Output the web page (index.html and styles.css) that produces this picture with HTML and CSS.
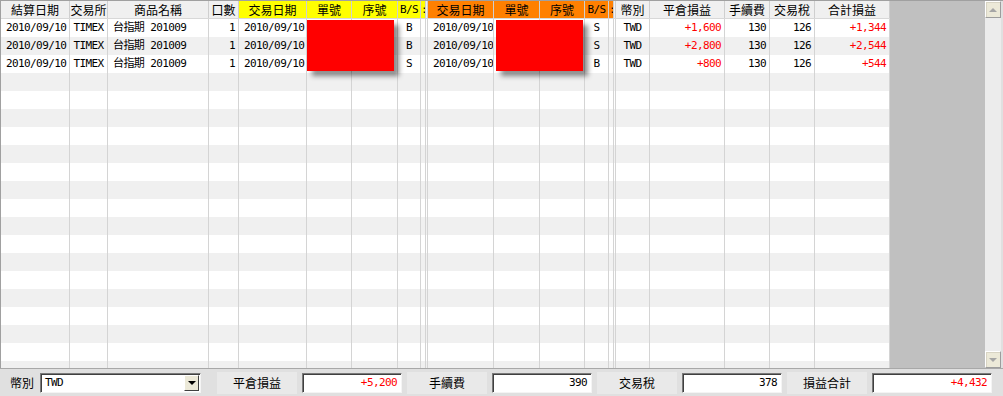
FILE: index.html
```html
<!DOCTYPE html>
<html lang="zh-Hant">
<head>
<meta charset="utf-8">
<title>Trades</title>
<link rel="stylesheet" href="styles.css">
</head>
<body>
<div class="app">
  <div class="main">
    <div class="grid">
      <div class="row head">
        <span>結算日期</span><span>交易所</span><span>商品名稱</span><span>口數</span>
        <span class="y">交易日期</span><span class="y">單號</span><span class="y">序號</span><span class="y lat">B/S</span><span class="y lat cut">:</span><span class="gap"></span>
        <span class="o">交易日期</span><span class="o">單號</span><span class="o">序號</span><span class="o lat">B/S</span><span class="o lat cut">:</span><span class="gap"></span>
        <span>幣別</span><span>平倉損益</span><span>手續費</span><span>交易稅</span><span>合計損益</span>
      </div>
      <div class="row data">
        <span class="l">2010/09/10</span><span class="c">TIMEX</span><span class="l">台指期 201009</span><span class="r">1</span>
        <span class="l">2010/09/10</span><span></span><span></span><span class="c">B</span><span></span><span></span>
        <span class="l">2010/09/10</span><span></span><span></span><span class="c">S</span><span></span><span></span>
        <span class="c">TWD</span><span class="r red">+1,600</span><span class="r">130</span><span class="r">126</span><span class="r red">+1,344</span>
      </div>
      <div class="row data alt">
        <span class="l">2010/09/10</span><span class="c">TIMEX</span><span class="l">台指期 201009</span><span class="r">1</span>
        <span class="l">2010/09/10</span><span></span><span></span><span class="c">B</span><span></span><span></span>
        <span class="l">2010/09/10</span><span></span><span></span><span class="c">S</span><span></span><span></span>
        <span class="c">TWD</span><span class="r red">+2,800</span><span class="r">130</span><span class="r">126</span><span class="r red">+2,544</span>
      </div>
      <div class="row data">
        <span class="l">2010/09/10</span><span class="c">TIMEX</span><span class="l">台指期 201009</span><span class="r">1</span>
        <span class="l">2010/09/10</span><span></span><span></span><span class="c">S</span><span></span><span></span>
        <span class="l">2010/09/10</span><span></span><span></span><span class="c">B</span><span></span><span></span>
        <span class="c">TWD</span><span class="r red">+800</span><span class="r">130</span><span class="r">126</span><span class="r red">+544</span>
      </div>
      <div class="row fill">
        <span></span><span></span><span></span><span></span><span></span><span></span><span></span>
        <span></span><span></span><span></span><span></span><span></span><span></span><span></span>
        <span></span><span></span><span></span><span></span><span></span><span></span><span></span>
      </div>
      <div class="mask mask-a"></div>
      <div class="mask mask-b"></div>
    </div>
    <div class="blank"></div>
    <div class="scroll">
      <div class="sbtn"><i class="tri up"></i></div>
      <div class="track"></div>
      <div class="sbtn"><i class="tri down"></i></div>
    </div>
  </div>
  <div class="bar">
    <span class="lbl first">幣別</span>
    <div class="select"><span class="sval">TWD</span><span class="dd"><i class="tri dark"></i></span></div>
    <span class="blk blk-first">平倉損益</span>
    <span class="box red">+5,200</span>
    <span class="blk">手續費</span>
    <span class="box">390</span>
    <span class="blk">交易稅</span>
    <span class="box">378</span>
    <span class="blk">損益合計</span>
    <span class="box wide red">+4,432</span>
  </div>
</div>
</body>
</html>
```

FILE: styles.css
```css
* { box-sizing: border-box; }

html, body {
  margin: 0;
  padding: 0;
  background: #e0e0e0;
}

.app {
  width: 1003px;
  height: 396px;
  overflow: hidden;
  display: flex;
  flex-direction: column;
  font-family: "Noto Sans CJK TC", sans-serif;
  font-size: 12px;
  color: #000;
}

.main {
  height: 368px;
  display: flex;
  border-top: 1px solid #a0a0a0;
  border-left: 1px solid #a0a0a0;
  padding-right: 2px;
  background: #e0e0e0;
}

.grid {
  position: relative;
  width: 889px;
  display: flex;
  flex-direction: column;
  background: #fff;
}

.row {
  display: grid;
  grid-template-columns: 69px 38px 101px 30px 68px 45px 46px 23px 5px 2px 66px 46px 45px 24px 5px 2px 34px 75px 45px 45px 75px;
  height: 18px;
}

.row > span {
  border-right: 1px solid #d4d4d4;
  overflow: hidden;
  white-space: nowrap;
  line-height: 18px;
}

.head {
  background: #f0f0f0;
  border-bottom: 1px solid #d8d8d8;
}

.head > span {
  text-align: center;
  line-height: 17px;
  border-right: 1px solid #cfcfcf;
}

.head .y { background: #ffff00; }
.head .o { background: #ff8000; }
.head .gap { background: #f0f0f0; }

.lat, .data > span, .box, .sval {
  font-family: "DejaVu Sans Mono", "Noto Sans CJK TC", monospace;
  font-size: 11px;
  letter-spacing: -0.6px;
}

.head .cut {
  text-align: left;
  padding-left: 0;
}

.data { background: #fff; }
.data.alt { background: #f0f0f0; }

.data .l { padding-left: 5px; }
.data .c { text-align: center; }
.data .r { text-align: right; padding-right: 3px; }

.red { color: #ff0000; }

.fill {
  flex: 1;
  height: auto;
  background: repeating-linear-gradient(#f0f0f0 0 18px, #ffffff 18px 36px);
}

.mask {
  position: absolute;
  top: 19px;
  width: 87px;
  height: 51px;
  background: #ff0000;
  box-shadow: 5px 5px 5px rgba(0, 0, 0, 0.45);
}
.mask-a { left: 306px; }
.mask-b { left: 495px; }

.blank {
  flex: 1;
  background: #c0c0c0;
}

.scroll {
  width: 16px;
  display: flex;
  flex-direction: column;
  background: #ececec;
}

.track { flex: 1; }

.sbtn {
  height: 17px;
  background: #ece9d8;
  border: 1px solid;
  border-color: #ffffff #9d9d9d #9d9d9d #ffffff;
  box-shadow: 1px 1px 0 #d8d4c4 inset;
  display: flex;
  align-items: center;
  justify-content: center;
}

.tri {
  width: 0;
  height: 0;
  border-left: 4px solid transparent;
  border-right: 4px solid transparent;
}
.tri.up { border-bottom: 4px solid #a6a6a6; }
.tri.down { border-top: 4px solid #a6a6a6; }
.tri.dark { border-top: 4px solid #000; }

.bar {
  height: 28px;
  border-top: 1px solid #a8a8a8;
  background: #e0e0e0;
  display: flex;
  align-items: center;
  gap: 5px;
  padding-left: 10px;
}

.lbl.first { width: 26px; margin-right: -1px; }

.select {
  width: 161px;
  height: 20px;
  background: #fff;
  border: 1px solid;
  border-color: #7a7a7a #f4f4f4 #f4f4f4 #7a7a7a;
  box-shadow: 1px 1px 0 #404040 inset;
  display: flex;
  align-items: center;
}

.sval {
  flex: 1;
  padding-left: 4px;
  line-height: 18px;
}

.dd {
  width: 15px;
  height: 16px;
  margin-right: 1px;
  background: #ece9d8;
  border: 1px solid;
  border-color: #ffffff #404040 #404040 #ffffff;
  display: flex;
  align-items: center;
  justify-content: center;
}

.blk {
  width: 80px;
  height: 22px;
  line-height: 22px;
  background: #e9e9e9;
  text-align: center;
}

.blk-first { margin-left: 11px; }

.box {
  width: 100px;
  height: 20px;
  line-height: 18px;
  background: #fff;
  border: 1px solid;
  border-color: #7a7a7a #f4f4f4 #f4f4f4 #7a7a7a;
  box-shadow: 1px 1px 0 #404040 inset;
  text-align: right;
  padding-right: 4px;
}

.box.wide { width: 120px; }
```
